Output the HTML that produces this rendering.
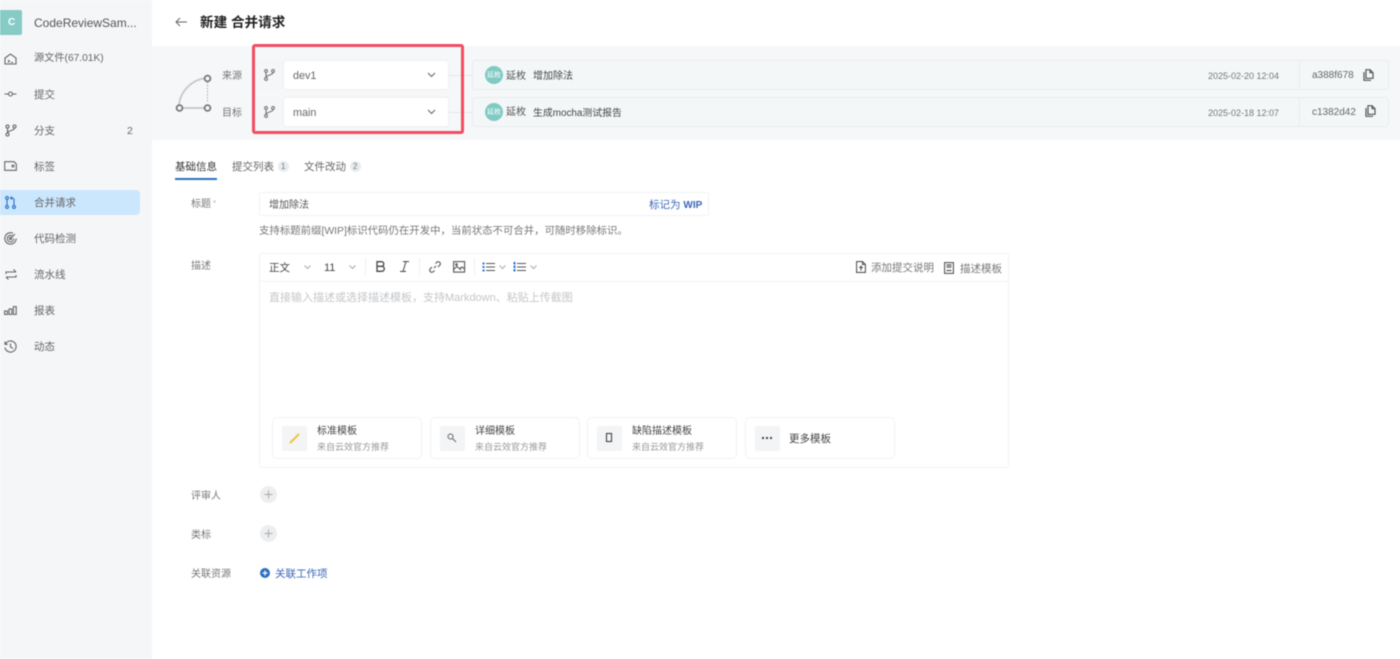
<!DOCTYPE html>
<html lang="zh">
<head>
<meta charset="utf-8">
<title>新建 合并请求</title>
<style>
html,body{margin:0;padding:0;background:#fff;}
body{width:1400px;height:659px;position:relative;overflow:hidden;font-family:"Liberation Sans","Noto Sans CJK SC",sans-serif;font-size:10px;color:#555;filter:blur(.45px);}
.a{position:absolute;white-space:nowrap;line-height:14px;margin-top:2px;}
.b{position:absolute;box-sizing:border-box;}
svg{position:absolute;overflow:visible;fill:none;stroke:#666;stroke-width:1.1;}
.a.n{font-size:10.5px;color:#666;margin-top:0;}
.sel{background:#fff;border:1px solid #eef0f2;border-radius:3px;}
.commit{background:#f4f7f8;border:1px solid #e8ecee;border-radius:3px;}
.tpl{background:#fff;border:1px solid #f1f2f4;border-radius:5px;height:42px;width:150px;top:417px;}
.ti{position:absolute;left:9px;top:8px;width:25px;height:25px;background:#f2f4f5;border-radius:2px;}
</style>
</head>
<body>
<!-- sidebar -->
<div class="b" style="left:0;top:0;width:152px;height:659px;background:#f4f6f8;"></div>
<div class="b" style="left:0;top:10px;width:22px;height:25px;background:#86cbc6;border-radius:0 2px 2px 0;"></div>
<div class="a" style="left:8px;top:16px;font-size:10px;font-weight:bold;color:#fff;margin-top:0;">C</div>
<div class="a" style="left:34px;top:16px;font-size:12px;color:#555;margin-top:0;">CodeReviewSam...</div>
<div class="b" style="left:0;top:190px;width:140px;height:25px;background:#cbe7fd;border-radius:0 4px 4px 0;"></div>
<div class="a n" style="left:34px;top:52px;font-size:10.2px;">源文件(67.01K)</div>
<div class="a n" style="left:34px;top:88px;">提交</div>
<div class="a n" style="left:34px;top:124px;">分支</div>
<div class="a" style="left:127px;top:124px;font-size:10.5px;color:#666;margin-top:0;">2</div>
<div class="a n" style="left:34px;top:160px;">标签</div>
<div class="a n" style="left:34px;top:196px;">合并请求</div>
<div class="a n" style="left:34px;top:232px;">代码检测</div>
<div class="a n" style="left:34px;top:268px;">流水线</div>
<div class="a n" style="left:34px;top:304px;">报表</div>
<div class="a n" style="left:34px;top:340px;">动态</div>
<svg style="left:4px;top:53px" width="13" height="12" viewBox="0 0 13 12"><path d="M1 5 6.500 1 12 5V11H1ZM4 7l1.500 1.300L4 9.500M7 9.500H9"/></svg>
<svg style="left:4px;top:90px" width="13" height="8" viewBox="0 0 13 8"><circle cx="6.500" cy="4" r="2"/><path d="M0.500 4H4.500M8.500 4H12.500"/></svg>
<svg style="left:5px;top:124px" width="12" height="13" viewBox="0 0 12 13"><circle cx="2.500" cy="2.500" r="1.500"/><circle cx="2.500" cy="10.500" r="1.500"/><circle cx="9.500" cy="2.500" r="1.500"/><path d="M2.500 4V9M9.500 4C9.500 7 3 6 2.500 9"/></svg>
<svg style="left:4px;top:161px" width="13" height="10" viewBox="0 0 13 10"><path d="M0.700 0.700H10L12.300 3V9.300H0.700Z"/><circle cx="9" cy="5" r="1"/></svg>
<svg style="left:5px;top:196px;stroke:#2b6fc2" width="11" height="13" viewBox="0 0 11 13"><circle cx="2" cy="2" r="1.400"/><circle cx="2" cy="11" r="1.400"/><circle cx="9" cy="11" r="1.400"/><path d="M2 3.500V9.500M9 9.500V3.500C9 2.500 8 2 6 2M7 .5 5.500 2 7 3.500"/></svg>
<svg style="left:4px;top:232px" width="13" height="13" viewBox="0 0 13 13"><path d="M9 1.300A5.700 5.700 0 1 0 12.200 6.500"/><path d="M8.500 4A3.300 3.300 0 1 0 9.800 6.500"/><circle cx="6.500" cy="6.500" r="1.100"/><path d="M6.500 6.500 11 2"/></svg>
<svg style="left:5px;top:268px" width="12" height="13" viewBox="0 0 12 13"><path d="M1 6V4H11M8.500 1.500 11 4M11 7V9H1M3.500 11.500 1 9"/></svg>
<svg style="left:4px;top:306px" width="13" height="9" viewBox="0 0 13 9"><rect x="0.600" y="5" width="2.800" height="3.400"/><rect x="5" y="3" width="2.800" height="5.400"/><rect x="9.400" y="0.600" width="2.800" height="7.800"/></svg>
<svg style="left:4px;top:340px" width="13" height="13" viewBox="0 0 13 13"><path d="M1.500 4A5.600 5.600 0 1 1 1 7.500M1 1.500V4.300H3.800M6.500 3.500V7L9 8.500"/></svg>

<!-- header -->
<svg style="left:175px;top:17px;stroke-width:1" width="12" height="10" viewBox="0 0 12 10"><path d="M12 5H1M5 1 1 5 5 9"/></svg>
<div class="a" style="left:200px;top:14px;font-size:13.6px;font-weight:bold;color:#222;">新建 合并请求</div>

<!-- band -->
<div class="b" style="left:152px;top:46px;width:1248px;height:94px;background:#f5f7f8;"></div>
<svg style="left:174px;top:72px;stroke:#c4c6c8;stroke-width:1.700" width="38" height="40" viewBox="0 0 38 40"><path d="M5 35C5 20 18 7 33 6"/><path d="M6 36H32"/><path d="M33.500 10V31" stroke-dasharray="1.500 1.500" stroke-width="1" stroke="#aaa"/><circle cx="33.500" cy="6.500" r="2.900" fill="#f5f7f8" stroke="#777" stroke-width="1.800"/><circle cx="5.500" cy="36" r="2.900" fill="#f5f7f8" stroke="#777" stroke-width="1.800"/><circle cx="33.500" cy="36" r="2.900" fill="#f5f7f8" stroke="#777" stroke-width="1.800"/></svg>
<div class="a" style="left:222px;top:68px;color:#777;">来源</div>
<div class="a" style="left:222px;top:105px;color:#777;">目标</div>

<div class="b" style="left:448px;top:75px;width:25px;height:1px;background:#e4e7e9;"></div>
<div class="b" style="left:448px;top:112px;width:25px;height:1px;background:#e4e7e9;"></div>

<div class="b" style="left:252px;top:44px;width:212px;height:90px;border:3px solid #f04d63;border-radius:3px;"></div>
<div class="b" style="left:255px;top:60px;width:193px;height:30px;background:#f4f6f7;border-radius:3px;"></div>
<div class="b" style="left:255px;top:97px;width:193px;height:30px;background:#f4f6f7;border-radius:3px;"></div>
<div class="b sel" style="left:283px;top:60px;width:166px;height:30px;"></div>
<div class="b sel" style="left:283px;top:97px;width:166px;height:30px;"></div>
<svg style="left:264px;top:69px;stroke:#777" width="11" height="12" viewBox="0 0 11 12"><circle cx="2" cy="2" r="1.400"/><circle cx="2" cy="10" r="1.400"/><circle cx="9" cy="2" r="1.400"/><path d="M2 3.500V8.500M9 3.500C9 6.500 2.500 5.500 2 8.500"/></svg>
<svg style="left:264px;top:106px;stroke:#777" width="11" height="12" viewBox="0 0 11 12"><circle cx="2" cy="2" r="1.400"/><circle cx="2" cy="10" r="1.400"/><circle cx="9" cy="2" r="1.400"/><path d="M2 3.500V8.500M9 3.500C9 6.500 2.500 5.500 2 8.500"/></svg>
<div class="a" style="left:293px;top:68px;font-size:10.8px;color:#666;margin-top:1px;">dev1</div>
<div class="a" style="left:293px;top:105px;font-size:10.8px;color:#666;margin-top:1px;">main</div>
<svg style="left:427px;top:72px" width="9" height="6" viewBox="0 0 9 6"><path d="M1 1 4.500 4.500 8 1"/></svg>
<svg style="left:427px;top:109px" width="9" height="6" viewBox="0 0 9 6"><path d="M1 1 4.500 4.500 8 1"/></svg>

<!-- commits -->
<div class="b commit" style="left:472px;top:60px;width:917px;height:30px;"></div>
<div class="b commit" style="left:472px;top:97px;width:917px;height:30px;"></div>
<div class="b" style="left:1299px;top:60px;width:1px;height:30px;background:#e8ecee;"></div>
<div class="b" style="left:1299px;top:97px;width:1px;height:30px;background:#e8ecee;"></div>
<div class="b" style="left:485px;top:66px;width:18px;height:18px;border-radius:50%;background:#7fcac3;"></div>
<div class="b" style="left:485px;top:103px;width:18px;height:18px;border-radius:50%;background:#7fcac3;"></div>
<div class="a" style="left:487px;top:68px;font-size:7px;color:#fff;margin-top:1px;">延枚</div>
<div class="a" style="left:487px;top:105px;font-size:7px;color:#fff;margin-top:1px;">延枚</div>
<div class="a" style="left:506px;top:68px;color:#555;">延枚</div>
<div class="a" style="left:533px;top:68px;color:#444;">增加除法</div>
<div class="a" style="left:506px;top:105px;color:#555;margin-top:1px;">延枚</div>
<div class="a" style="left:533px;top:105px;color:#444;font-size:9.9px;">生成mocha测试报告</div>
<div class="a" style="left:1208px;top:69px;font-size:9px;color:#777;margin-top:0;">2025-02-20 12:04</div>
<div class="a" style="left:1208px;top:105px;font-size:9px;color:#777;margin-top:1px;">2025-02-18 12:07</div>
<div class="a" style="left:1312px;top:67px;font-size:10px;color:#666;">a388f678</div>
<div class="a" style="left:1312px;top:104px;font-size:10px;color:#666;">c1382d42</div>
<svg style="left:1363px;top:69px;stroke:#555" width="11" height="12" viewBox="0 0 11 12"><path d="M3 .7H7L10 3.700V9.300H3ZM7 .7V3.700H10M1 3V11.300H8" stroke-width="1.200"/></svg>
<svg style="left:1365px;top:105px;stroke:#555" width="11" height="12" viewBox="0 0 11 12"><path d="M3 .7H7L10 3.700V9.300H3ZM7 .7V3.700H10M1 3V11.300H8" stroke-width="1.200"/></svg>

<!-- tabs -->
<div class="a" style="left:175px;top:158px;color:#333;font-size:10.5px;">基础信息</div>
<div class="b" style="left:175px;top:178px;width:42px;height:2px;background:#2b6fc2;"></div>
<div class="a" style="left:232px;top:158px;color:#666;font-size:10.5px;">提交列表</div>
<div class="b" style="left:278px;top:161px;width:11px;height:11px;border-radius:50%;background:#e8ecee;"></div>
<div class="a" style="left:281px;top:159px;font-size:8px;color:#777;margin-top:1px;">1</div>
<div class="a" style="left:304px;top:158px;color:#666;font-size:10.5px;">文件改动</div>
<div class="b" style="left:350px;top:161px;width:11px;height:11px;border-radius:50%;background:#e8ecee;"></div>
<div class="a" style="left:353px;top:159px;font-size:8px;color:#777;margin-top:1px;">2</div>

<!-- title -->
<div class="a" style="left:191px;top:196px;color:#777;">标题</div>
<div class="a" style="left:213px;top:195px;font-size:8px;color:#e3a0a8;">*</div>
<div class="b" style="left:259px;top:192px;width:450px;height:24px;border:1px solid #f2f3f5;border-radius:3px;"></div>
<div class="a" style="left:269px;top:197px;color:#555;">增加除法</div>
<div class="a" style="left:649px;top:196px;color:#3a67b8;font-size:10.5px;">标记为 <span style="font-weight:bold;font-size:10px;">WIP</span></div>
<div class="a" style="left:259px;top:223px;color:#777;font-size:10.42px;">支持标题前缀[WIP]标识代码仍在开发中，当前状态不可合并，可随时移除标识。</div>

<!-- description -->
<div class="a" style="left:191px;top:258px;color:#777;">描述</div>
<div class="b" style="left:259px;top:253px;width:750px;height:215px;border:1px solid #f2f3f5;border-radius:3px;"></div>
<div class="b" style="left:260px;top:281px;width:748px;height:1px;background:#f2f3f5;"></div>
<div class="a" style="left:269px;top:259px;color:#444;font-size:10.5px;">正文</div>
<svg style="left:304px;top:265px;stroke:#aaa;stroke-width:1" width="7" height="4" viewBox="0 0 7 4"><path d="M.5 .5 3.500 3.500 6.500 .5"/></svg>
<div class="a" style="left:324px;top:259px;color:#444;font-size:11px;">11</div>
<svg style="left:349px;top:265px;stroke:#aaa;stroke-width:1" width="7" height="4" viewBox="0 0 7 4"><path d="M.5 .5 3.500 3.500 6.500 .5"/></svg>
<div class="b" style="left:365px;top:258px;width:1px;height:18px;background:#f0f0f0;"></div>
<svg style="left:376px;top:261px;stroke:#444;stroke-width:1.300" width="9" height="11" viewBox="0 0 9 11"><path d="M1 .7H5.500C8.500 .7 8.500 5.300 5.500 5.300H1ZM1 5.300H6C9 5.300 9 10.300 6 10.300H1Z"/></svg>
<svg style="left:400px;top:261px;stroke:#555" width="9" height="11" viewBox="0 0 9 11"><path d="M3 .6H9M0 10.400H6M6 .6 3 10.400"/></svg>
<div class="b" style="left:419px;top:258px;width:1px;height:18px;background:#f0f0f0;"></div>
<svg style="left:429px;top:261px;stroke:#555" width="12" height="12" viewBox="0 0 12 12"><path d="M5 7 7 5M6.500 2.500 7.700 1.300C10 -.3 12.500 2 10.700 4.300L9 6M5.500 9.500 4.300 10.700C2 12.300 -.3 10 1.300 7.700L3 6"/></svg>
<svg style="left:453px;top:261px;stroke:#555" width="12" height="12" viewBox="0 0 12 12"><rect x=".6" y=".6" width="11" height="10.500"/><path d="M.6 8.500 4 5.500 8 9M7 7.500 9 6 11.500 8"/><circle cx="3.500" cy="3.500" r=".8"/></svg>
<div class="b" style="left:474px;top:258px;width:1px;height:18px;background:#f0f0f0;"></div>
<svg style="left:482px;top:262px;stroke:#555" width="13" height="10" viewBox="0 0 13 10"><path d="M4 1.500H13M4 5H13M4 8.500H13"/><path d="M.5 1.500H2.500M.5 5H2.500M.5 8.500H2.500" stroke="#2b75d0" stroke-width="2"/></svg>
<svg style="left:499px;top:265px;stroke:#aaa;stroke-width:1" width="7" height="4" viewBox="0 0 7 4"><path d="M.5 .5 3.500 3.500 6.500 .5"/></svg>
<svg style="left:513px;top:262px;stroke:#555" width="13" height="10" viewBox="0 0 13 10"><path d="M4 1.500H13M4 5H13M4 8.500H13"/><path d="M1.500 0V10" stroke="#2b75d0" stroke-width="2" stroke-dasharray="2.500 1"/></svg>
<svg style="left:530px;top:265px;stroke:#aaa;stroke-width:1" width="7" height="4" viewBox="0 0 7 4"><path d="M.5 .5 3.500 3.500 6.500 .5"/></svg>
<svg style="left:856px;top:261px;stroke:#555" width="10" height="12" viewBox="0 0 10 12"><path d="M.6 .6H6.500L9.400 3.500V11.400H.6ZM6.500 .6V3.500H9.400M5 9.500V5.500M3.300 7 5 5.300 6.700 7"/></svg>
<div class="a" style="left:871px;top:259px;color:#777;font-size:10.5px;">添加提交说明</div>
<svg style="left:944px;top:262px;stroke:#555" width="10" height="12" viewBox="0 0 10 12"><rect x=".6" y=".6" width="8.800" height="10.800"/><path d="M2.500 3H7.500M2.500 5H7.500M2.500 8.500H7.500" stroke-width="1.200"/></svg>
<div class="a" style="left:960px;top:260px;color:#777;font-size:10.5px;">描述模板</div>
<div class="a" style="left:269px;top:289px;color:#c4c6c9;font-size:11px;">直接输入描述或选择描述模板，支持Markdown、粘贴上传截图</div>

<!-- templates -->
<div class="b tpl" style="left:272px;"><div class="ti"></div>
<svg style="left:16px;top:14px;stroke:#f2c33f;stroke-width:2" width="12" height="12" viewBox="0 0 12 12"><path d="M1 11 10 2"/></svg></div>
<div class="a" style="left:317px;top:423px;color:#444;">标准模板</div>
<div class="a" style="left:317px;top:439px;font-size:9px;color:#999;margin-top:1px;">来自云效官方推荐</div>
<div class="b tpl" style="left:430px;"><div class="ti"></div>
<svg style="left:16px;top:15px;stroke-width:1" width="10" height="10" viewBox="0 0 10 10"><circle cx="3.500" cy="3.500" r="2.500"/><path d="M5.500 5.500 9 9"/></svg></div>
<div class="a" style="left:475px;top:423px;color:#444;">详细模板</div>
<div class="a" style="left:475px;top:439px;font-size:9px;color:#999;margin-top:1px;">来自云效官方推荐</div>
<div class="b tpl" style="left:587px;"><div class="ti"></div>
<svg style="left:18px;top:15px;stroke:#444" width="6" height="9" viewBox="0 0 6 9"><rect x=".5" y=".5" width="5" height="8"/></svg></div>
<div class="a" style="left:632px;top:423px;color:#444;">缺陷描述模板</div>
<div class="a" style="left:632px;top:439px;font-size:9px;color:#999;margin-top:1px;">来自云效官方推荐</div>
<div class="b tpl" style="left:745px;"><div class="ti"></div>
<svg style="left:16px;top:19px;stroke:#444;stroke-width:2;stroke-dasharray:2 2" width="12" height="2" viewBox="0 0 12 2"><path d="M0 1H11"/></svg></div>
<div class="a" style="left:789px;top:430px;color:#444;font-size:10.5px;">更多模板</div>

<!-- bottom -->
<div class="a" style="left:191px;top:488px;color:#777;">评审人</div>
<div class="b" style="left:260px;top:486px;width:17px;height:17px;border-radius:50%;background:#eceef0;"></div>
<svg style="left:264px;top:490px;stroke:#aaa;stroke-width:1" width="9" height="9" viewBox="0 0 9 9"><path d="M4.500 .5V8.500M.5 4.500H8.500"/></svg>
<div class="a" style="left:191px;top:527px;color:#777;">类标</div>
<div class="b" style="left:260px;top:525px;width:17px;height:17px;border-radius:50%;background:#eceef0;"></div>
<svg style="left:264px;top:529px;stroke:#aaa;stroke-width:1" width="9" height="9" viewBox="0 0 9 9"><path d="M4.500 .5V8.500M.5 4.500H8.500"/></svg>
<div class="a" style="left:191px;top:566px;color:#777;">关联资源</div>
<div class="b" style="left:260px;top:568px;width:10px;height:10px;border-radius:50%;background:#2b6fc2;"></div>
<svg style="left:262px;top:570px;stroke:#fff;stroke-width:1.200" width="6" height="6" viewBox="0 0 6 6"><path d="M3 .5V5.500M.5 3H5.500"/></svg>
<div class="a" style="left:275px;top:565px;color:#3a67b8;font-size:10.5px;">关联工作项</div>
</body>
</html>
